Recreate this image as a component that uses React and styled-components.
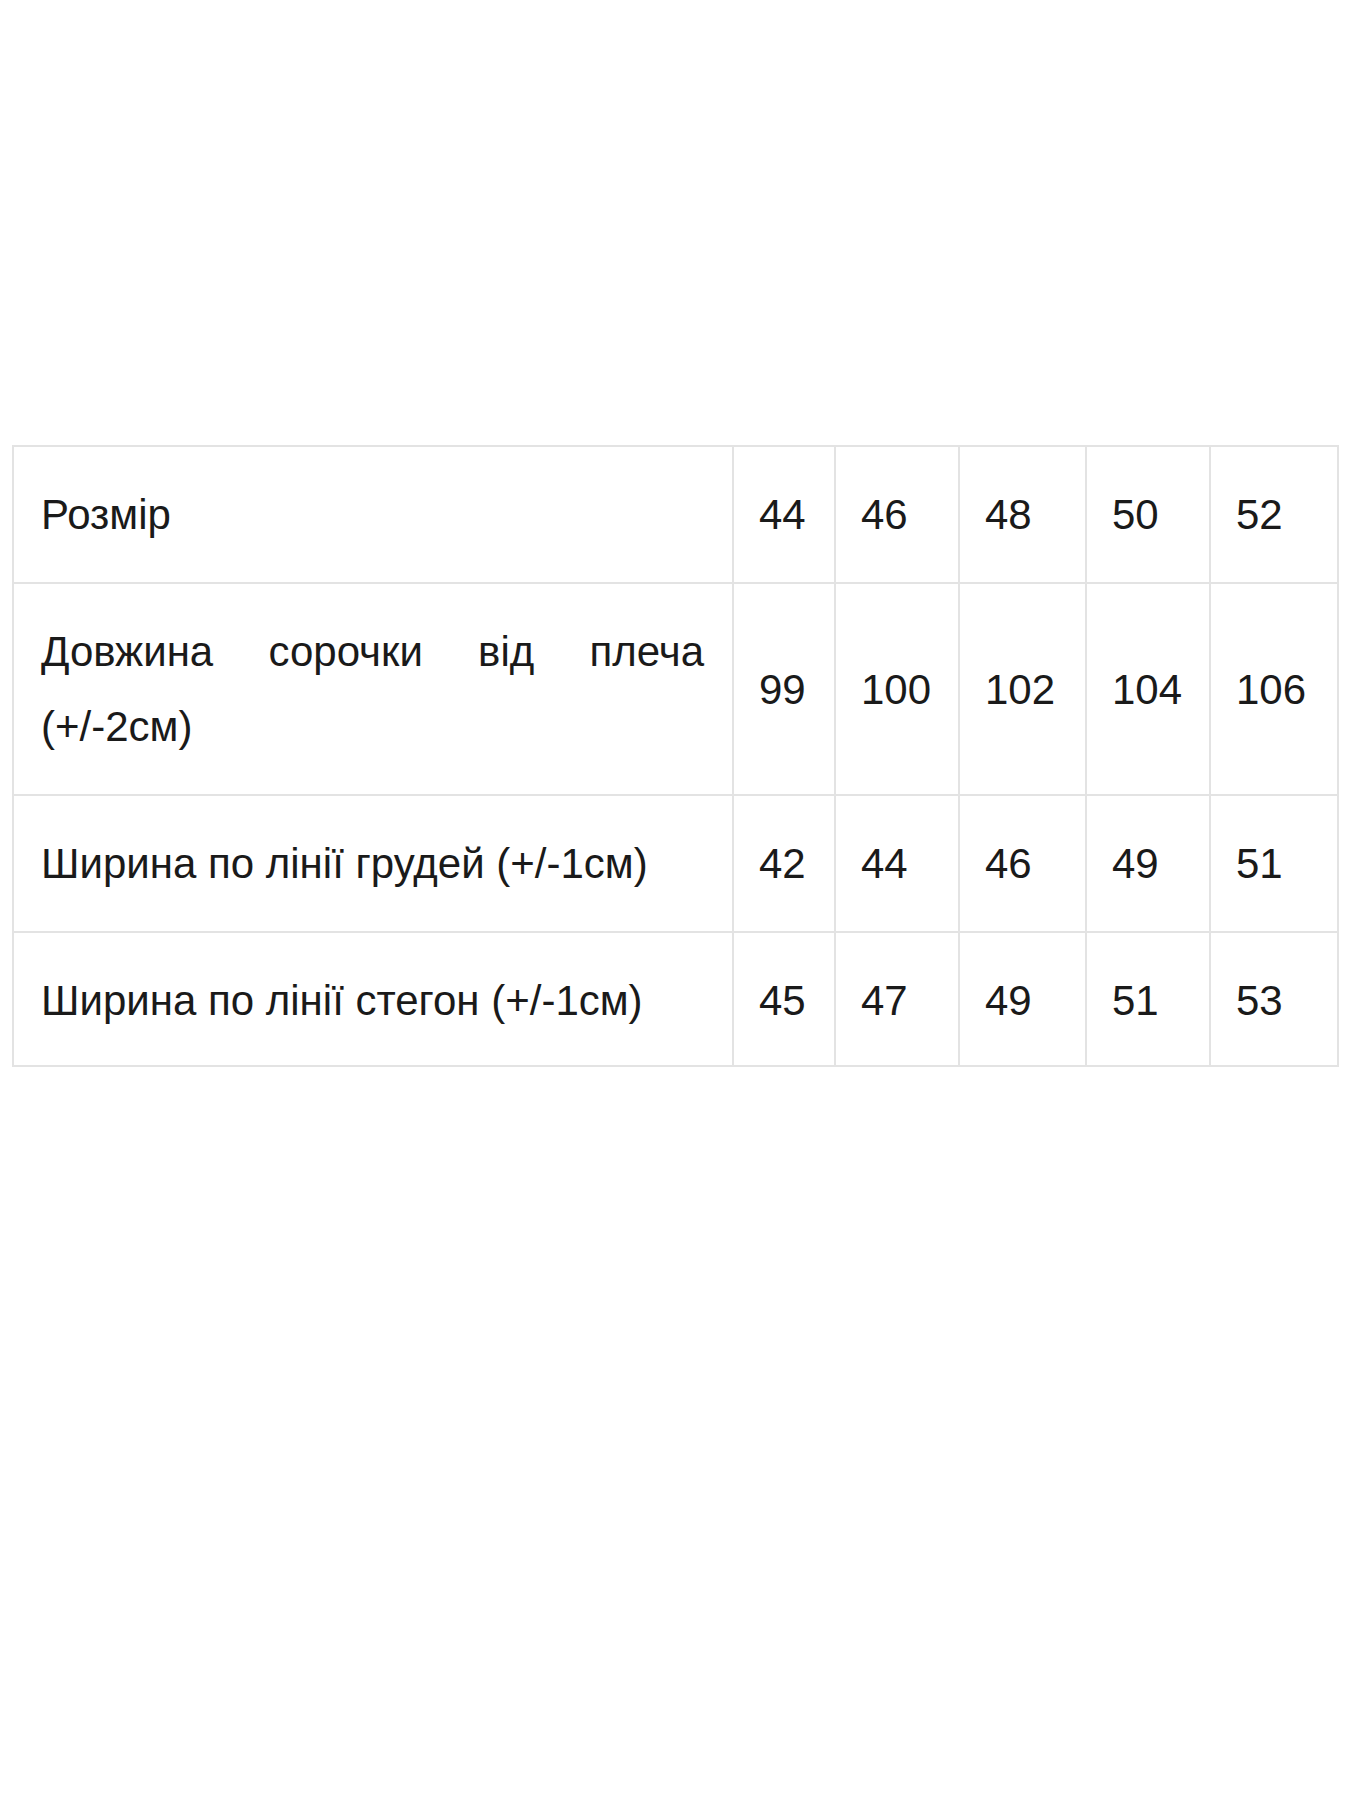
import React from "react";
import styled, { createGlobalStyle } from "styled-components";

const GlobalStyle = createGlobalStyle`
  html,
  body {
    margin: 0;
    padding: 0;
    background: #ffffff;
  }

  body {
    font-family: "Liberation Sans", Arial, sans-serif;
    color: #1a1a1a;
  }
`;

const Page = styled.div`
  width: 1350px;
  min-height: 1800px;
  padding: 445px 0 0 12px;
  box-sizing: border-box;
`;

const SizeTable = styled.table`
  width: 1325px;
  table-layout: fixed;
  border-collapse: collapse;
  font-size: 42px;
  line-height: 75px;

  tr:last-child td {
    padding-bottom: 27px;
  }
`;

const Cell = styled.td`
  border: 2px solid #e3e3e3;
  padding: 30px ${({ numeric }) => (numeric ? "20px 30px 25px" : "28px 30px 27px")};
  vertical-align: middle;
  text-align: ${({ numeric }) => (numeric ? "left" : "justify")};
  text-align-last: left;
  white-space: ${({ numeric }) => (numeric ? "nowrap" : "normal")};
`;

const columns = [720, 102, 124, 127, 124, 128];

const rows = [
  { label: "Розмір", values: ["44", "46", "48", "50", "52"] },
  {
    label: "Довжина сорочки від плеча (+/-2см)",
    values: ["99", "100", "102", "104", "106"],
  },
  {
    label: "Ширина по лінії грудей (+/-1см)",
    values: ["42", "44", "46", "49", "51"],
  },
  {
    label: "Ширина по лінії стегон (+/-1см)",
    values: ["45", "47", "49", "51", "53"],
  },
];

export default function App() {
  return (
    <>
      <GlobalStyle />
      <Page>
        <SizeTable>
          <colgroup>
            {columns.map((w, i) => (
              <col key={i} style={{ width: w }} />
            ))}
          </colgroup>
          <tbody>
            {rows.map((row) => (
              <tr key={row.label}>
                <Cell>{row.label}</Cell>
                {row.values.map((v, i) => (
                  <Cell key={i} numeric>
                    {v}
                  </Cell>
                ))}
              </tr>
            ))}
          </tbody>
        </SizeTable>
      </Page>
    </>
  );
}
